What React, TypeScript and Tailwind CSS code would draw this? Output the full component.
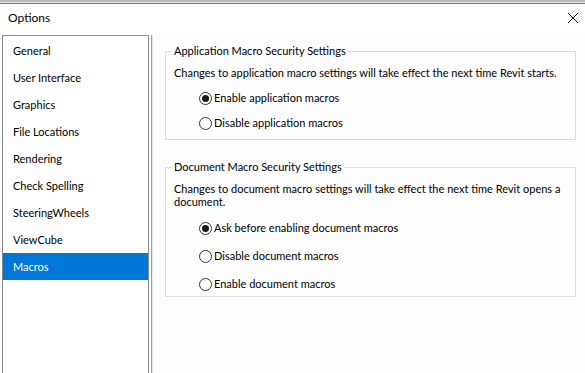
import React from 'react'

const pages = [
    'General',
    'User Interface',
    'Graphics',
    'File Locations',
    'Rendering',
    'Check Spelling',
    'SteeringWheels',
    'ViewCube',
    'Macros',
]

function Radio({ label, checked }: { label: string; checked?: boolean }) {
    return (
        <label className="flex h-[16px] items-center">
            <span className="flex h-[13px] w-[13px] items-center justify-center rounded-full border border-[#333333] bg-white">
                {checked && <span className="h-[7px] w-[7px] rounded-full bg-[#1a1a1a]" />}
            </span>
            <span className="ml-[2px]">{label}</span>
        </label>
    )
}

export default function App() {
    return (
        <div className="flex h-[373px] w-[585px] flex-col overflow-hidden bg-[#fdfdfd] text-[11px] leading-[16px] text-black [font-family:Lato,sans-serif]">
            {/* window edge */}
            <div className="h-[2px] shrink-0 bg-[#b9b9b9]" />
            <div className="h-px shrink-0 bg-[#e4e4e4]" />
            <div className="h-px shrink-0 bg-[#3a86d6]" />

            {/* title bar */}
            <div className="flex h-[31px] shrink-0 items-start justify-between bg-white">
                <span className="pl-[8px] pt-[6px] text-[12px]">Options</span>
                <svg width="12" height="12" viewBox="0 0 12 12" className="mr-[6px] mt-[8px]">
                    <path d="M1 1 L11 11 M11 1 L1 11" stroke="#111" strokeWidth="1" />
                </svg>
            </div>

            <div className="flex min-h-0 flex-1">
                {/* page list */}
                <div className="ml-[2px] w-[147px] shrink-0 border border-b-0 border-[#828790] bg-white pt-px">
                    {pages.map(p => (
                        <div
                            key={p}
                            className={
                                p === 'Macros'
                                    ? 'flex h-[27px] items-center bg-[#0078d7] pl-[10px] text-white'
                                    : 'flex h-[27px] items-center pl-[10px]'
                            }
                        >
                            {p}
                        </div>
                    ))}
                </div>

                {/* splitter */}
                <div className="ml-[2px] w-px shrink-0 bg-[#a0a0a0]" />
                <div className="w-px shrink-0 bg-[#e8e8e8]" />

                {/* settings */}
                <div className="ml-[12px] flex w-[411px] flex-col pt-[8px]">
                    <fieldset className="border border-[#dcdcdc] pb-[8px] pl-[8px]">
                        <legend className="ml-[-2px] px-[2px]">Application Macro Security Settings</legend>
                        <p className="whitespace-nowrap pt-[6px]">
                            Changes to application macro settings will take effect the next time Revit starts.
                        </p>
                        <div className="ml-[25px] mt-[9px] flex flex-col gap-[9px]">
                            <Radio label="Enable application macros" checked />
                            <Radio label="Disable application macros" />
                        </div>
                    </fieldset>

                    <fieldset className="mt-[19px] border border-[#dcdcdc] pb-[4px] pl-[8px]">
                        <legend className="ml-[-2px] px-[2px]">Document Macro Security Settings</legend>
                        <p className="whitespace-nowrap pt-[7px] leading-[13px]">
                            Changes to document macro settings will take effect the next time Revit opens a
                            <br />
                            document.
                        </p>
                        <div className="ml-[25px] mt-[12px] flex flex-col gap-[12px]">
                            <Radio label="Ask before enabling document macros" checked />
                            <Radio label="Disable document macros" />
                            <Radio label="Enable document macros" />
                        </div>
                    </fieldset>
                </div>
            </div>
        </div>
    )
}
